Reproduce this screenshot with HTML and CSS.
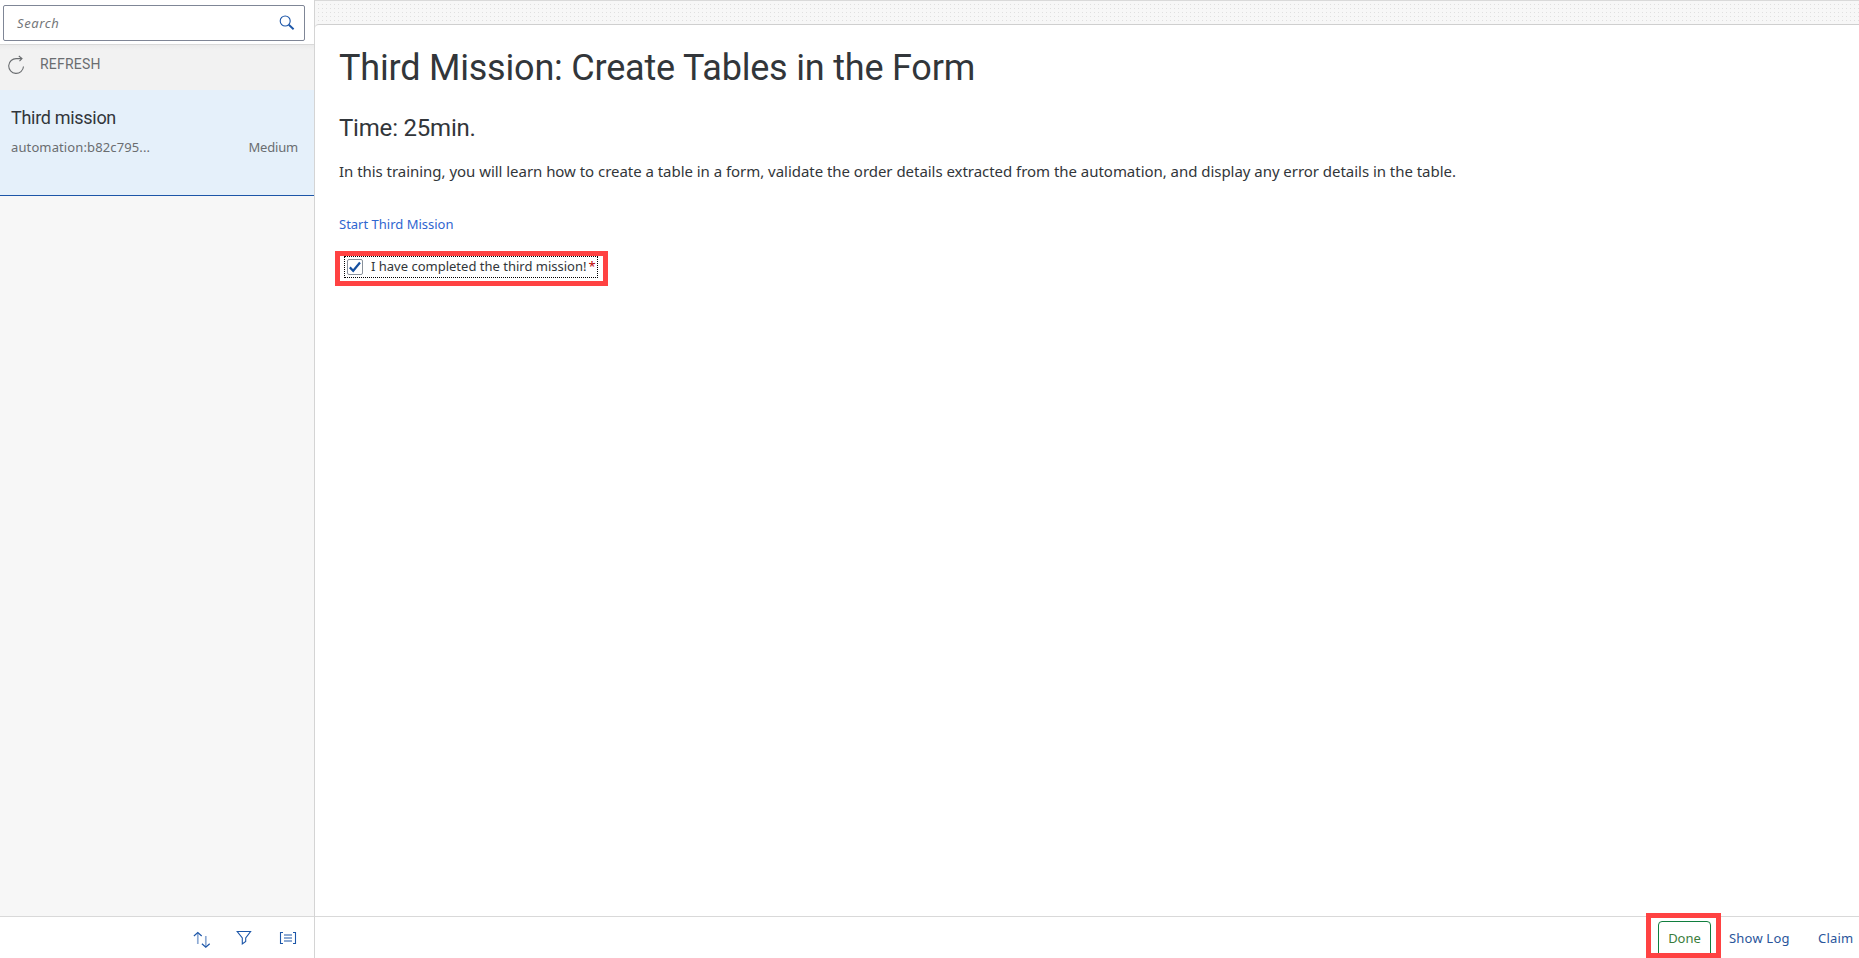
FILE: index.html
```
<!DOCTYPE html>
<html lang="en">
<head>
<meta charset="utf-8">
<title>My Inbox</title>
<link rel="stylesheet" href="styles.css">
</head>
<body>
<div class="app">
  <aside class="master">
    <header class="search-bar">
      <div class="search-field">
        <span class="placeholder">Search</span>
        <svg class="search-icon" width="16" height="16" viewBox="0 0 16 16" fill="none" stroke="#1c56a8"><circle cx="6.2" cy="6" r="5" stroke-width="1.1"/><path d="M9.8 9.7 14.6 14.2" stroke-width="1.9"/></svg>
      </div>
    </header>
    <div class="refresh">
      <svg class="refresh-icon" width="18" height="20" viewBox="0 0 18 20" fill="none" stroke="#6a6d70" stroke-width="1.1"><path d="M15.5 11.5A7.4 7.4 0 1 1 8.5 3.6H14M10.8 1 14 3.6 11.5 6.2"/></svg>
      <span class="refresh-label">REFRESH</span>
    </div>
    <article class="item">
      <h2 class="item-title"><span>Third mission</span></h2>
      <div class="item-row"><span class="item-source">automation:b82c795...</span><span class="item-priority">Medium</span></div>
    </article>
    <div class="list-space"></div>
    <footer class="master-footer">
      <svg width="18" height="18" viewBox="0 0 18 18" fill="none" stroke="#1c56a8"><path d="M4.8 2v11M12.8 5v11" stroke="#8eabd5" stroke-width="1.7"/><path d="M.9 5 4.8 1.6 8.7 5M8.9 12.7l3.9 3.6 3.9-3.6" stroke-width="1.2"/></svg>
      <svg class="filter-icon" width="16" height="16" viewBox="0 0 16 16" fill="none" stroke="#1c56a8" stroke-width="1.1"><path d="M1.2 1.5H14.6L9.7 8V11.5L6.3 14V8Z"/></svg>
      <svg class="group-icon" width="18" height="14" viewBox="0 0 18 14" fill="none" stroke="#1c56a8" stroke-width="1.1"><path d="M4 1.5H1.5V12.5H4M14 1.5H16.5V12.5H14M5 4H13M5 7H13M5 10H13"/></svg>
    </footer>
  </aside>
  <main class="detail">
    <div class="dots"></div>
    <section class="content">
      <h1 class="title"><span>Third Mission: Create Tables in the Form</span></h1>
      <h3 class="time"><span>Time: 25min.</span></h3>
      <p class="description"><span>In this training, you will learn how to create a table in a form, validate the order details extracted from the automation, and display any error details in the table.</span></p>
      <a class="start"><span>Start Third Mission</span></a>
      <div class="check-highlight">
        <label class="check">
          <span class="box"><svg width="14" height="14" viewBox="0 0 14 14" fill="none" stroke="#1550a0" stroke-width="2.2"><path d="M1.8 7.4 5.2 10.8 12 2.5"/></svg></span>
          <span class="check-label">I have completed the third mission!</span><span class="required">*</span>
        </label>
      </div>
    </section>
    <footer class="detail-footer">
      <div class="done-highlight"><div class="done-button"><span>Done</span></div></div>
      <span class="action show-log">Show Log</span>
      <span class="action claim">Claim</span>
    </footer>
  </main>
</div>
</body>
</html>
```
FILE: styles.css
```
* { box-sizing: border-box; }
body { margin: 0; font-family: "Noto Sans", "Liberation Sans", sans-serif; font-size: 13px; color: #32363a; background: #fff; }
h1, h2, h3, p { margin: 0; font-weight: 400; }
svg { display: block; flex: none; }
.app { display: flex; width: 1859px; height: 958px; overflow: hidden; }

.master { width: 315px; flex: none; display: flex; flex-direction: column; border-right: 1px solid #d4d4d4; }
.search-bar { height: 45px; padding: 5px 9px 0 3px; border-bottom: 1px solid #d9d9d9; }
.search-field { height: 36px; border: 1px solid #7f8696; border-radius: 2px; display: flex; justify-content: space-between; padding: 0 9px 0 13px; }
.placeholder { font-style: italic; color: #74777a; line-height: 34px; letter-spacing: 0.6px; }
.search-icon { margin-top: 9px; }
.refresh { height: 45px; background: linear-gradient(#ebebeb, #f2f2f2 5px); display: flex; padding-left: 8px; color: #6a6d70; }
.refresh-icon { margin-top: 10px; }
.refresh-label { margin-left: 14px; line-height: 38px; font-size: 14px; font-family: Roboto, sans-serif; letter-spacing: 0.2px; }
.item { height: 106px; background: #e5f0fa; border-bottom: 1px solid #1c56a8; padding: 15px 16px 0 11px; }
.item-title { font-size: 18px; line-height: 26px; font-family: Roboto, sans-serif; letter-spacing: -0.3px; }
.item-row { display: flex; justify-content: space-between; margin-top: 5px; line-height: 22px; color: #6a6d70; }
.item-source { letter-spacing: 0.12px; }
.item-priority { letter-spacing: -0.2px; }
.list-space { flex: 1; background: #f7f7f7; }
.master-footer { height: 42px; border-top: 1px solid #d9d9d9; display: flex; align-items: center; justify-content: flex-end; gap: 26px; padding: 4px 17px 0 0; }
.filter-icon { margin: -3px 1px 0 -1px; }
.group-icon { margin-top: -3px; }

.detail { flex: 1; min-width: 0; display: flex; flex-direction: column; background: #f7f7f7; }
.dots { height: 24px; flex: none; border-top: 1px solid #d9d9d9; background: conic-gradient(from 90deg at 3px 3px, #e0e0e0 90deg, #f7f7f7 0) 0 0 / 4px 4px; }
.content { flex: 1; padding: 19px 24px 0; display: flex; flex-direction: column; align-items: flex-start; background: #fff; border-top: 1px solid #cfcfcf; border-top-left-radius: 4px; }
.title { font-size: 36px; line-height: 48px; font-family: Roboto, sans-serif; letter-spacing: -0.2px; }
.time { font-size: 24px; line-height: 32px; margin-top: 20px; font-family: Roboto, sans-serif; letter-spacing: -0.2px; }
.description { font-size: 15px; line-height: 24px; margin-top: 15px; white-space: nowrap; letter-spacing: -0.037px; }
.start { color: #2f66d0; line-height: 20px; margin-top: 31px; }
.check-highlight { width: 273px; height: 35px; margin: 17px 0 0 -4px; border: 5px solid #ff4242; padding-left: 4px; }
.check { display: flex; align-items: center; width: 254px; height: 22px; border: 1px dotted #000; padding-left: 2px; white-space: nowrap; }
.box { width: 16px; height: 16px; border: 1px solid #89919a; border-radius: 2px; flex: none; }
.check-label { margin: -2px 0 0 8px; }
.required { color: #b00; margin: -2px 0 0 2px; }
.detail-footer { height: 42px; flex: none; background: #fff; border-top: 1px solid #d9d9d9; display: flex; justify-content: flex-end; padding-right: 6px; }
.done-highlight { width: 75px; height: 45px; margin: -4px 0 0; border: 5px solid #ff4242; padding: 3px 5px 0 7px; overflow: hidden; }
.done-button { width: 53px; height: 36px; border: 1px solid #107e3e; border-radius: 4px; line-height: 33px; text-align: center; color: #3a7d3c; }
.action { color: #2a559b; line-height: 43px; white-space: nowrap; }
.show-log { margin-left: 8px; width: 61px; letter-spacing: 0.2px; }
.claim { margin-left: 28px; width: 35px; letter-spacing: 0.2px; }
```
